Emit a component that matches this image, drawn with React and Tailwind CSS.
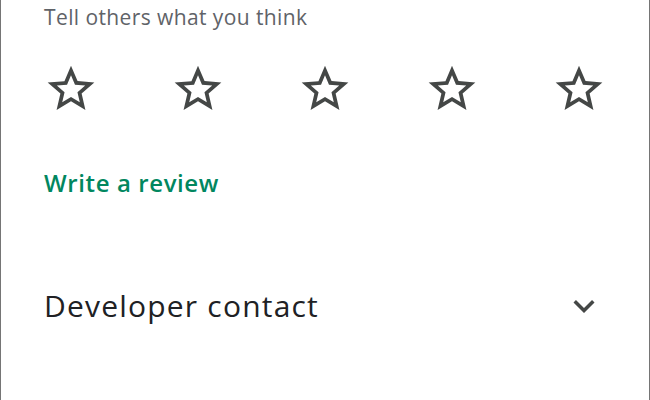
import React from 'react'

const StarOutline = () => (
  <svg viewBox="0 0 24 24" className="w-14 h-14 fill-[#444746]">
    <path d="M22 9.24l-7.19-.62L12 2 9.19 8.63 2 9.24l5.46 4.73L5.82 21 12 17.27 18.18 21l-1.63-7.03L22 9.24zM12 15.4l-3.76 2.27 1-4.28-3.32-2.88 4.38-.38L12 6.1l1.71 4.04 4.38.38-3.32 2.88 1 4.28L12 15.4z" />
  </svg>
)

const ExpandMore = () => (
  <svg viewBox="0 0 24 24" className="w-[42px] h-[42px] fill-[#444746]">
    <path d="M16.59 8.59L12 13.17 7.41 8.59 6 10l6 6 6-6z" />
  </svg>
)

const App = () => {
  return (
    <div className="w-[650px] h-[400px] bg-white border-x border-[#757575] overflow-hidden font-['Open_Sans',sans-serif]">
      <div className="px-[43px]">
        <p className="text-[21px] leading-[24px] pt-[5px] text-[#5f6368] tracking-[0.4px]">
          Tell others what you think
        </p>

        <div className="flex justify-between mt-[32px] -mx-[1px]">
          {[0, 1, 2, 3, 4].map((i) => (
            <StarOutline key={i} />
          ))}
        </div>

        <p className="mt-[52px] text-[24px] leading-[28px] font-semibold text-[#01875f] tracking-[0.6px]">
          Write a review
        </p>

        <div className="flex items-center justify-between mt-[88px]">
          <h2 className="text-[30px] leading-[34px] text-[#202124] tracking-[1.2px]">Developer contact</h2>
          <div className="mr-[1px]">
            <ExpandMore />
          </div>
        </div>
      </div>
    </div>
  )
}

export default App
